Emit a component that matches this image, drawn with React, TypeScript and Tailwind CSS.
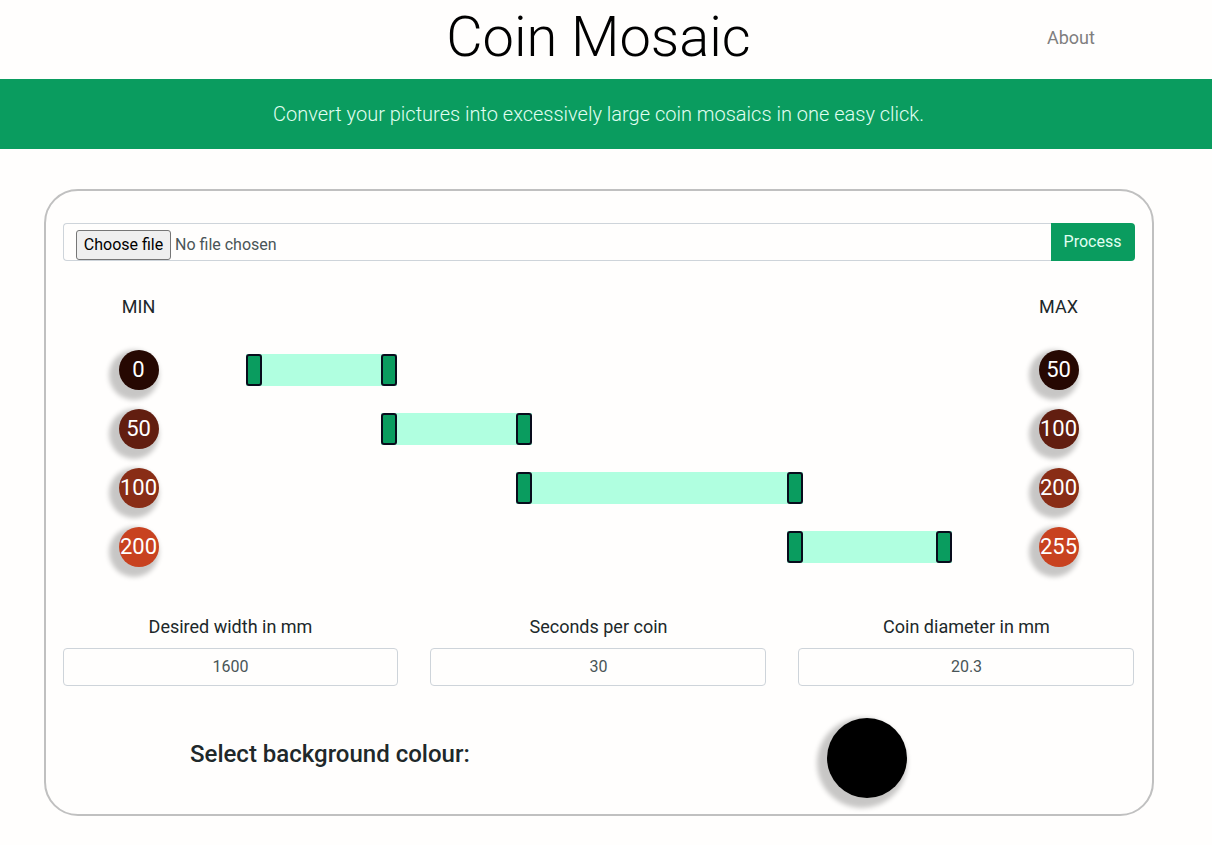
const rows = [
  { min: 0, max: 50, pad: 246, width: 151, dot: 'bg-[#260802]' },
  { min: 50, max: 100, pad: 381, width: 151, dot: 'bg-[#621e10]' },
  { min: 100, max: 200, pad: 516, width: 287, dot: 'bg-[#892d16]' },
  { min: 200, max: 255, pad: 787, width: 165, dot: 'bg-[#c84220]' },
];

const fields = [
  { label: 'Desired width in mm', value: '1600', nudge: '' },
  { label: 'Seconds per coin', value: '30', nudge: 'pl-px' },
  { label: 'Coin diameter in mm', value: '20.3', nudge: 'pl-px' },
];

function Coin({ value, color }: { value: number; color: string }) {
  return (
    <div className={`flex size-10 items-center justify-center rounded-full pr-px text-[22px] leading-none text-white shadow-[-5px_5px_5px_5px_rgba(0,0,0,0.22)] ${color}`}>
      {value}
    </div>
  );
}

function Handle() {
  return <div className="h-8 w-4 rounded-[3px] border-2 border-[#080c1c] bg-[#0a9c5f]" />;
}

export default function App() {
  return (
    <div className="h-[845px] overflow-hidden bg-[#fffefd] font-['Roboto',sans-serif] text-[#20282a]">
      <header className="grid h-[79px] grid-cols-[283px_631px_298px] items-center pb-1">
        <span />
        <h1 className="text-center text-[56px] font-light leading-[67px] text-black">Coin Mosaic</h1>
        <a className="pl-[133px] text-lg text-[#7f7f7f]">About</a>
      </header>
      <div className="flex h-[70px] items-center justify-center bg-[#0a9c5f] pr-[15px] text-xl font-light text-[#e0fff2]">
        Convert your pictures into excessively large coin mosaics in one easy click.
      </div>
      <main className="ml-[44px] mt-10 h-[627px] w-[1110px] rounded-[34px] border-2 border-[#c0c0c0] px-[17px] pt-8">
        <div className="flex h-[38px] w-[1072px]">
          <div className="flex flex-1 items-start rounded-l border border-r-0 border-[#ced4da] pl-3 pt-1.5 text-base text-[#495557]">
            <button className="h-[30px] w-[95px] rounded-[3px] border border-[#767676] bg-[#efefef] text-black">Choose file</button>
            <span className="ml-1 leading-[30px]">No file chosen</span>
          </div>
          <button className="w-[84px] rounded-r bg-[#0a9c5f] pr-px text-base text-[#e0fff2]">Process</button>
        </div>
        <div className="mt-8 flex justify-between px-[57px] text-lg leading-7">
          <span className="w-[37px] text-center">MIN</span>
          <span className="w-[39px] text-center">MAX</span>
        </div>
        <div className="mt-[29px] flex flex-col gap-[19px]">
          {rows.map((row) => (
            <div key={row.min} className="flex h-10 items-center pl-14">
              <Coin value={row.min} color={row.dot} />
              <div className="flex h-8 w-[880px]">
                <div style={{ width: row.pad - 159 }} />
                <div className="flex justify-between bg-[#b0ffe0]" style={{ width: row.width }}>
                  <Handle />
                  <Handle />
                </div>
              </div>
              <Coin value={row.max} color={row.dot} />
            </div>
          ))}
        </div>
        <div className="mt-[46px] grid w-[1071px] grid-cols-[335px_336px_336px] gap-x-8">
          {fields.map((field) => (
            <label key={field.label} className="block text-center text-lg leading-[27px]">
              <span className={`block ${field.nudge}`}>{field.label}</span>
              <input className={`mt-2 block h-[38px] w-full rounded border border-[#ced4da] pb-0.5 text-center text-base text-[#495557] ${field.nudge}`} defaultValue={field.value} />
            </label>
          ))}
        </div>
        <div className="mt-8 flex">
          <h2 className="ml-[127px] mt-[22px] w-[637px] text-2xl font-medium leading-[29px]">Select background colour:</h2>
          <button aria-label="Background colour" className="size-20 rounded-full bg-black shadow-[-5px_5px_5px_5px_rgba(0,0,0,0.22)]" />
        </div>
      </main>
    </div>
  );
}
